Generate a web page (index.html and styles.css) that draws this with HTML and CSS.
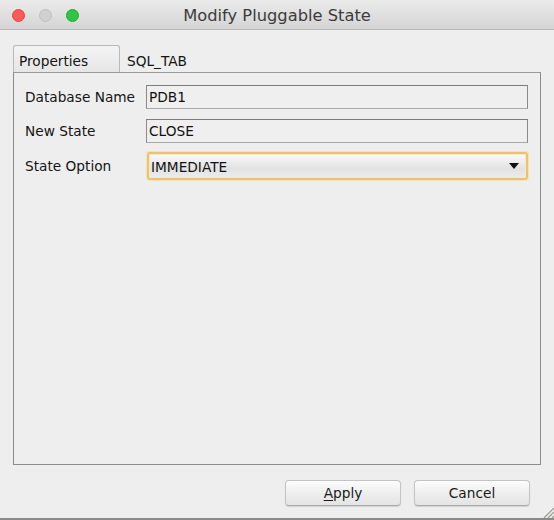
FILE: index.html
```html
<!DOCTYPE html>
<html>
<head>
<meta charset="utf-8">
<link rel="stylesheet" href="styles.css">
</head>
<body>
<div class="window">
  <div class="titlebar">
    <div class="lights">
      <span class="light red"></span>
      <span class="light gray"></span>
      <span class="light green"></span>
    </div>
    <div class="title">Modify Pluggable State</div>
  </div>
  <div class="content">
    <div class="tabs">
      <div class="tab active">Properties</div>
      <div class="tab">SQL_TAB</div>
    </div>
    <div class="panel">
      <div class="row">
        <label class="label">Database Name</label>
        <div class="field">PDB1</div>
      </div>
      <div class="row">
        <label class="label">New State</label>
        <div class="field">CLOSE</div>
      </div>
      <div class="row combo-row">
        <label class="label">State Option</label>
        <div class="combo">
          <span>IMMEDIATE</span>
          <svg class="arrow" width="10" height="6" viewBox="0 0 10 6"><polygon points="0,0 10,0 5,6" fill="#111"/></svg>
        </div>
      </div>
    </div>
    <div class="buttons">
      <button class="btn"><u>A</u>pply</button>
      <button class="btn">Cancel</button>
    </div>
  </div>
  <svg class="grip" width="12" height="12" viewBox="0 0 12 12">
    <line x1="2" y1="12" x2="12" y2="2" stroke="#9a9a8a" stroke-width="1.2"/>
    <line x1="6" y1="12" x2="12" y2="6" stroke="#9a9a8a" stroke-width="1.2"/>
    <line x1="10" y1="12" x2="12" y2="10" stroke="#9a9a8a" stroke-width="1.2"/>
  </svg>
</div>
</body>
</html>
```
FILE: styles.css
```css
html, body {
  margin: 0;
  padding: 0;
}
body {
  width: 554px;
  height: 520px;
  overflow: hidden;
  background: #eeeeee;
  font-family: "DejaVu Sans", "Liberation Sans", sans-serif;
  font-size: 13.7px;
  color: #141414;
}
.window {
  position: relative;
  width: 554px;
  height: 520px;
  box-sizing: border-box;
  border-bottom: 2px solid #8a8a8a;
  background: #eeeeee;
}
.titlebar {
  height: 30px;
  box-sizing: border-box;
  border-bottom: 1px solid #b8b8b8;
  background: linear-gradient(#ebebeb, #d4d4d4);
  display: flex;
  align-items: center;
  position: relative;
}
.lights {
  display: flex;
  gap: 14px;
  padding-left: 12px;
  padding-top: 2px;
}
.light {
  width: 13px;
  height: 13px;
  border-radius: 50%;
  display: block;
  box-sizing: border-box;
}
.red { background: #fc5b57; border: 0.5px solid #e24640; }
.gray { background: #d0d0d0; border: 0.5px solid #c0c0c0; }
.green { background: #2fc641; border: 0.5px solid #26a834; }
.title {
  position: absolute;
  left: 0;
  right: 0;
  top: 6px;
  text-align: center;
  font-size: 16.3px;
  color: #3c3c3c;
}
.content {
  padding: 15px 13px 0 13px;
}
.tabs {
  display: flex;
  align-items: flex-end;
  height: 27px;
}
.tab {
  height: 27px;
  box-sizing: border-box;
  padding: 7px 6px 0 6px;
}
.tab.active {
  width: 107px;
  border: 1px solid #b9b9b9;
  border-bottom: none;
  border-radius: 3px 3px 0 0;
  background: linear-gradient(#f4f4f4, #e6e6e6);
  padding-left: 5px;
}
.tab:not(.active) {
  padding-left: 7px;
  padding-top: 8px;
}
.panel {
  width: 528px;
  height: 393px;
  box-sizing: border-box;
  border: 1px solid #8c8c8c;
  border-top-color: #9a9a9a;
  padding: 12px 12px 0 11px;
  display: flex;
  flex-direction: column;
  gap: 10px;
}
.row {
  display: flex;
  align-items: center;
}
.label {
  width: 121px;
  flex: none;
}
.field {
  width: 382px;
  height: 24px;
  box-sizing: border-box;
  border: 1px solid #8a8a8a;
  border-top-color: #7c7c7c;
  border-bottom-color: #a9a9a9;
  background: #efefef;
  padding: 3px 0 0 2px;
  color: #111;
}
.combo-row {
  margin-top: -1px;
}
.combo {
  margin-left: 1px;
  width: 381px;
  height: 28px;
  box-sizing: border-box;
  border: 2px solid #e9c272;
  border-radius: 3px;
  box-shadow: 0 0 0 1px #f6e2b4, inset 0 0 0 1px #f7e8c6;
  background: linear-gradient(#fbfbfb, #e2e2e2 60%, #ececec);
  display: flex;
  align-items: center;
  justify-content: space-between;
  padding: 1px 7px 0 2px;
  color: #111;
}
.arrow {
  display: block;
  margin-top: -2px;
}
.buttons {
  display: flex;
  justify-content: flex-end;
  gap: 13px;
  padding: 15px 11px 0 0;
}
.btn {
  width: 116px;
  height: 26px;
  font-family: "DejaVu Sans", "Liberation Sans", sans-serif;
  font-size: 13.7px;
  color: #1a1a1a;
  border: 1px solid #c4c4c4;
  border-bottom-color: #ababab;
  border-radius: 4px;
  background: linear-gradient(#fdfdfd, #eeeeee 50%, #e4e4e4);
  box-shadow: 0 1px 1px rgba(0,0,0,0.12);
  padding: 0;
}
.btn u {
  text-decoration-thickness: 1px;
  text-underline-offset: 2px;
}
.grip {
  position: absolute;
  right: 0;
  bottom: 0;
}
```
